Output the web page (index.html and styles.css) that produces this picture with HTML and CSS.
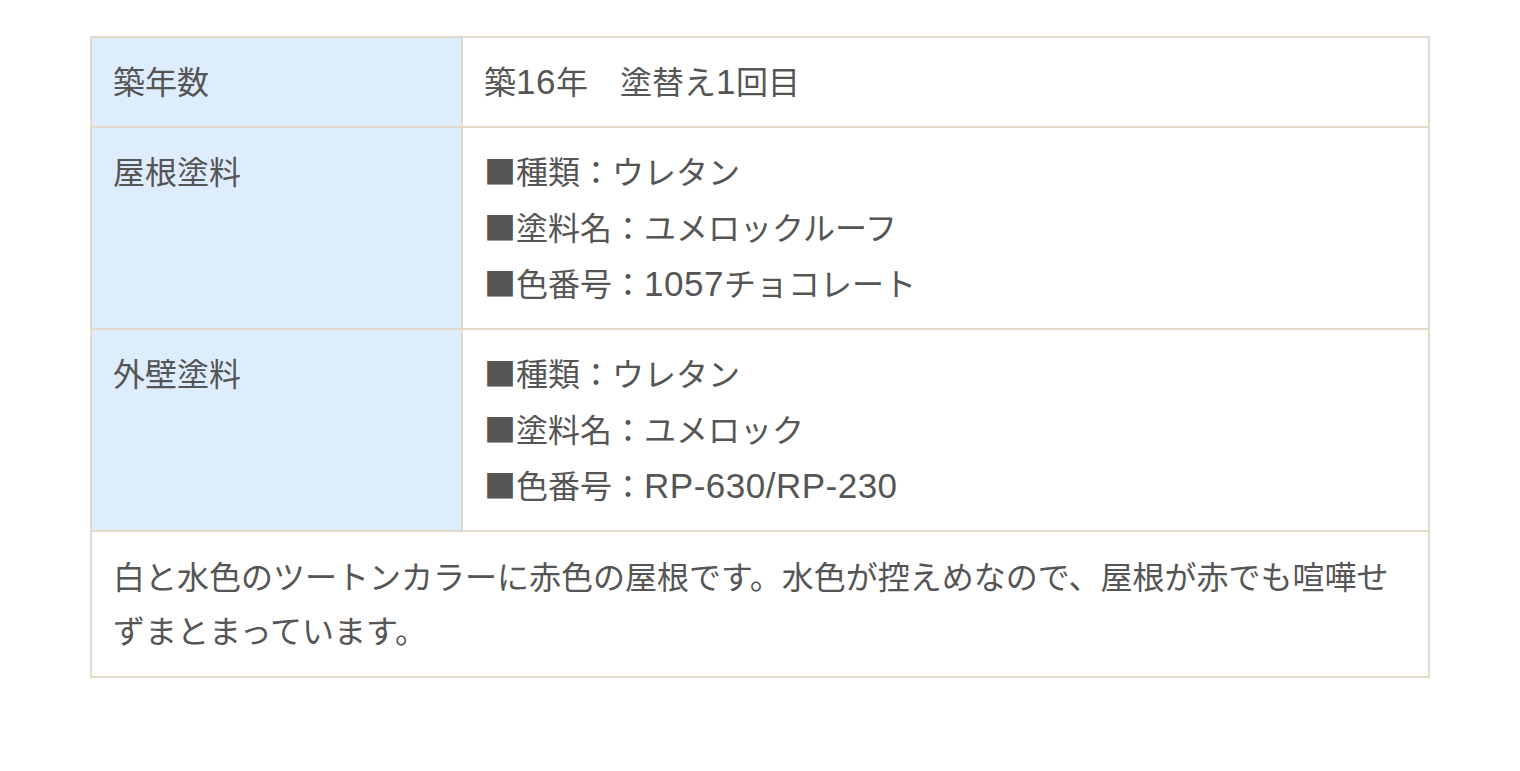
FILE: index.html
```html
<!DOCTYPE html>
<html lang="ja">
<head>
<meta charset="utf-8">
<link rel="stylesheet" href="styles.css">
</head>
<body>
<div class="wrap">
<table class="spec">
<tr>
<th>築年数</th>
<td>築<span class="lat">16</span>年　塗替え<span class="lat">1</span>回目</td>
</tr>
<tr>
<th>屋根塗料</th>
<td>■種類：ウレタン<br>■塗料名：ユメロックルーフ<br>■色番号：<span class="lat">1057</span>チョコレート</td>
</tr>
<tr>
<th>外壁塗料</th>
<td>■種類：ウレタン<br>■塗料名：ユメロック<br>■色番号：<span class="lat">RP-630/RP-230</span></td>
</tr>
<tr>
<td class="note" colspan="2">白と水色のツートンカラーに赤色の屋根です。水色が控えめなので、屋根が赤でも喧嘩せずまとまっています。</td>
</tr>
</table>
</div>
</body>
</html>
```

FILE: styles.css
```css
html, body {
  margin: 0;
  padding: 0;
  background: #fff;
}
body {
  font-family: "Noto Sans CJK JP", sans-serif;
  color: #555;
}
.wrap {
  padding: 36px 0 0 90px;
}
.spec {
  border-collapse: collapse;
  width: 1340px;
  font-size: 32px;
}
.spec th,
.spec td {
  border: 2px solid #e2dacb;
  padding: 14px 21px 18px;
  line-height: 56px;
  text-align: left;
  vertical-align: top;
  font-weight: normal;
}
.spec th {
  width: 327px;
  background: #deedfd;
}
.lat {
  font-family: "Liberation Sans", Arial, sans-serif;
  font-size: 35px;
  letter-spacing: 0.5px;
  line-height: 1;
}
.spec td.note {
  line-height: 54px;
  padding: 16px 21px 20px;
}
```
